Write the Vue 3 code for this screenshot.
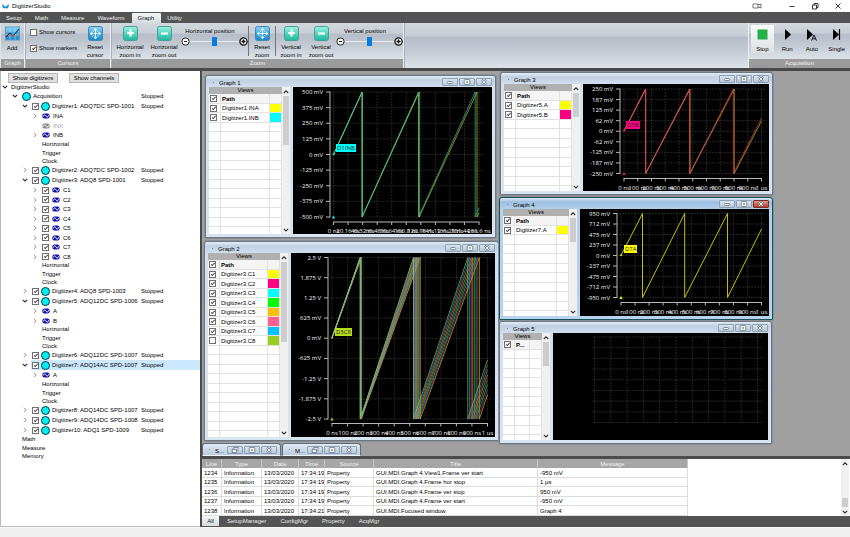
<script setup>
const menuTabs = ['Setup', 'Math', 'Measure', 'Waveform', 'Graph', 'Utility']

const range = (n) => Array.from({ length: n }, (_, i) => i)
const props = ['Horizontal', 'Trigger', 'Clock']

const digitizers = [
  { name: 'Digitizer1: ADQ7DC SPD-1001', open: true, channels: [{ name: 'INA' }, { name: 'INX', off: true }, { name: 'INB' }] },
  { name: 'Digitizer2: ADQ7DC SPD-1002' },
  { name: 'Digitizer3: ADQ8 SPD-1001', open: true, channels: range(8).map((i) => ({ name: 'C' + (i + 1), check: true })) },
  { name: 'Digitizer4: ADQ8 SPD-1003' },
  { name: 'Digitizer5: ADQ12DC SPD-1006', open: true, channels: [{ name: 'A' }, { name: 'B' }] },
  { name: 'Digitizer6: ADQ12DC SPD-1007' },
  { name: 'Digitizer7: ADQ14AC SPD-1007', open: true, selected: true, channels: [{ name: 'A' }] },
  { name: 'Digitizer8: ADQ14DC SPD-1007' },
  { name: 'Digitizer9: ADQ14DC SPD-1008' },
  { name: 'Digitizer10: ADQ1 SPD-1009' },
]

const usTicks = [...range(10).map((i) => (i === 0 ? '0 ns' : i * 100 + ' ns')), '1 us']

// Sawtooth split into one polyline per cycle so later cycles can be dimmed.
function saw(p, color, drops, endX, endY) {
  const { top, bottom } = p
  const [a, b, c] = drops
  return [
    { color, opacity: 0.9, points: `${p.x0},${p.zero} ${a},${top} ${a},${bottom}` },
    { color, opacity: 0.8, points: `${a},${bottom} ${b},${top} ${b},${bottom}` },
    { color, opacity: 0.66, points: `${b},${bottom} ${c},${top} ${c},${bottom} ${endX},${endY}` },
  ]
}

const p1 = { w: 199, h: 147, x0: 40.5, x1: 186, top: 5, bottom: 130, zero: 67.5, ax: 37, ay: 135, lx: 30, ly: 146,
  yl: ['500 mV', '375 mV', '250 mV', '125 mV', '0 mV', '-125 mV', '-250 mV', '-375 mV', '-500 mV'],
  xl: ['0 ns', '20.16 ns', '40.32 ns', '60.48 ns', '80.64 ns', '100.8 ns', '120.96 ns', '141.12 ns', '161.28 ns', '181.44 ns', '201.6 ns'] }
p1.lines = [...saw(p1, '#d8c800', [69.2, 126.2, 184], 186, 126), ...saw(p1, '#20d0c0', [69, 125.5, 182.2], 186, 121)]
p1.tag = { x: 43, y: 57, w: 20, text: 'D1INB', color: '#00ffff' }

const p2 = { w: 204, h: 184, x0: 41, x1: 196.5, top: 4.5, bottom: 166, zero: 85, ax: 37, ay: 170.5, lx: 30, ly: 182,
  yl: ['2.5 V', '1.875 V', '1.25 V', '625 mV', '0 mV', '-625 mV', '-1.25 V', '-1.875 V', '-2.5 V'], xl: usTicks }
const order = ['#d8d020', '#e02080', '#20c8c8', '#30c040', '#e09030', '#e06880', '#2090d8', '#90d050']
p2.lines = order.flatMap((c, i) => {
  const k = 7 - i
  const d3 = 176.8 + k * 1.65
  return saw(p2, c, [69.2 + k * 0.14, 122.5 + k * 0.95, d3], 196.5, 166 - (196.5 - d3) * 3)
})
p2.tag = { x: 44, y: 75, w: 17, text: 'D3C8', color: '#b4dc1e' }

const p3 = { w: 186, h: 107, x0: 41, x1: 178.5, top: 5, bottom: 89.5, zero: 47, ax: 37, ay: 94.5, lx: 30, ly: 106,
  yl: ['250 mV', '187 mV', '125 mV', '62 mV', '0 mV', '-62 mV', '-125 mV', '-187 mV', '-250 mV'], xl: usTicks }
p3.lines = [...saw(p3, '#e0c800', [62.7, 107, 151.2], 178.5, 37), ...saw(p3, '#e03070', [62.5, 106.5, 150.2], 178.5, 34)]
p3.tag = { x: 43, y: 37, w: 14, text: 'D5B', color: '#ff0080' }

const p4 = { w: 189, h: 107, x0: 41, x1: 181.5, top: 4.5, bottom: 88.5, zero: 46.5, ax: 37, ay: 93.5, lx: 30, ly: 105,
  yl: ['950 mV', '712 mV', '475 mV', '237 mV', '0 mV', '-237 mV', '-475 mV', '-712 mV', '-950 mV'], xl: usTicks }
p4.lines = saw(p4, '#d8d400', [62.5, 104.7, 147.5], 181.5, 20).map((l) => ({ ...l, opacity: 0.9 }))
p4.tag = { x: 44, y: 36, w: 13, text: 'D7A', color: '#ffff00' }

const p5 = { w: 215, h: 107, x0: 41.5, x1: 204.5, top: 4, bottom: 89.5, yl: [], xl: [], lines: [] }

const gridX = (p) => range(11).map((i) => p.x0 + ((p.x1 - p.x0) * i) / 10)
const gridY = (p) => range(9).map((i) => p.top + ((p.bottom - p.top) * i) / 8)

const c3 = ['#ffff00', '#ff0080', '#00ffff', '#00ff00', '#ffc000', '#ff6090', '#00c0ff', '#9acd20']
const windows = [
  { title: 'Graph 1', x: 3, y: 4, w: 291, h: 163, list: 73, thumb: 49, plot: p1, rows: 15,
    views: [{ n: 'Digitizer1.INA', c: '#ffff00', on: true }, { n: 'Digitizer1.INB', c: '#00ffff', on: true }] },
  { title: 'Graph 2', x: 2, y: 170, w: 295, h: 200, list: 72, thumb: 80, plot: p2, rows: 19,
    views: c3.map((c, i) => ({ n: 'Digitizer3.C' + (i + 1), c, on: i < 7 })) },
  { title: 'Graph 3', x: 298, y: 1, w: 273, h: 123, list: 68, thumb: 24, plot: p3, rows: 11,
    views: [{ n: 'Digitizer5.A', c: '#ffff00', on: true }, { n: 'Digitizer5.B', c: '#ff0080', on: true }] },
  { title: 'Graph 4', x: 297, y: 126, w: 274, h: 123, list: 66, thumb: 24, plot: p4, rows: 11, active: true,
    views: [{ n: 'Digitizer7.A', c: '#ffff00', on: true }] },
  { title: 'Graph 5', x: 297, y: 250, w: 273, h: 123, list: 39, thumb: 24, plot: p5, rows: 11, narrow: true, views: [] },
]
const minimized = ['S...', 'M...']

const logHead = ['Line', 'Type', 'Date', 'Time', 'Source', 'Title', 'Message']
const log = [
  ['1234', 'Information', '13/03/2020', '17:34:19', 'Property', 'GUI.MDI.Graph 4.View1.Frame ver start', '-950 mV'],
  ['1235', 'Information', '13/03/2020', '17:34:19', 'Property', 'GUI.MDI.Graph 4.Frame hor stop', '1 µs'],
  ['1236', 'Information', '13/03/2020', '17:34:19', 'Property', 'GUI.MDI.Graph 4.Frame ver stop', '950 mV'],
  ['1237', 'Information', '13/03/2020', '17:34:19', 'Property', 'GUI.MDI.Graph 4.Frame ver start', '-950 mV'],
  ['1238', 'Information', '13/03/2020', '17:34:21', 'Property', 'GUI.MDI.Focused window', 'Graph 4'],
]
const logTabs = ['All', 'SetupManager', 'ConfigMgr', 'Property', 'AcqMgr']
</script>

<template>
  <div class="app">
    <svg class="defs" aria-hidden="true">
      <defs>
        <linearGradient id="g-teal" x1="0" y1="0" x2="0" y2="1">
          <stop offset="0" stop-color="#9ff0dc" /><stop offset="0.5" stop-color="#4ed8bf" /><stop offset="1" stop-color="#22b59c" />
        </linearGradient>
        <linearGradient id="g-blue" x1="0" y1="0" x2="0" y2="1">
          <stop offset="0" stop-color="#8fd4f4" /><stop offset="0.5" stop-color="#3ba8e0" /><stop offset="1" stop-color="#1b86c8" />
        </linearGradient>
      </defs>
      <symbol id="i-plus" viewBox="0 0 15 15">
        <rect x="0.5" y="0.5" width="14" height="14" rx="2" fill="url(#g-teal)" stroke="#4b9c92" />
        <path d="M7.5 3.5v7M4 7h7" stroke="#fff" stroke-width="2.2" />
      </symbol>
      <symbol id="i-minus" viewBox="0 0 15 15">
        <rect x="0.5" y="0.5" width="14" height="14" rx="2" fill="url(#g-teal)" stroke="#4b9c92" />
        <path d="M4 7.5h7" stroke="#fff" stroke-width="2.2" />
      </symbol>
      <symbol id="i-reset" viewBox="0 0 15 15">
        <rect x="0.5" y="0.5" width="14" height="14" rx="2" fill="url(#g-blue)" stroke="#4487a8" />
        <path d="M7.5 4v7M4 7.5h7" stroke="#e4f6ff" stroke-width="1" />
        <path d="M7.5 1.8l2.2 2.4H5.3zM7.5 13.2l2.2-2.4H5.3zM1.8 7.5l2.4-2.2v4.4zM13.2 7.5l-2.4-2.2v4.4z" fill="#e4f6ff" />
        <path d="M4.4 4.4l1.6 1.6M10.6 4.4L9 6M4.4 10.6L6 9M10.6 10.6L9 9" stroke="#c3e8fa" stroke-width="0.8" />
      </symbol>
      <symbol id="i-add" viewBox="0 0 15 15">
        <rect x="0.5" y="1" width="14" height="13" fill="url(#g-blue)" stroke="#5a9dc8" />
        <path d="M1 5h13M1 9h13M5 1.5v12M10 1.5v12" stroke="#a6dcf6" stroke-width="0.6" />
        <path d="M1 11l4-4 3 3 6-7" fill="none" stroke="#12305c" stroke-width="1.1" />
        <path d="M1 7l3 3 3-1 3 2 4-4" fill="none" stroke="#e07060" stroke-width="0.9" />
      </symbol>
      <symbol id="i-chan" viewBox="0 0 8 6">
        <rect x="0.3" y="0.6" width="7.4" height="4.8" rx="2.2" fill="currentColor" />
        <path d="M1.2 3.6C2 1.4 3 1.4 4 3s2 1.4 2.8-.8" fill="none" stroke="#fff" stroke-width="1" />
      </symbol>
      <symbol id="i-down" viewBox="0 0 6 6"><path d="M0.8 1.8L3 4l2.2-2.2" fill="none" stroke="#333" stroke-width="1.1" /></symbol>
      <symbol id="i-right" viewBox="0 0 6 6"><path d="M2 0.8L4.2 3 2 5.2" fill="none" stroke="#888" stroke-width="0.9" /></symbol>
      <symbol id="i-up" viewBox="0 0 6 6"><path d="M0.8 4L3 1.8 5.2 4" fill="none" stroke="#333" stroke-width="1.1" /></symbol>
      <symbol id="i-wmin" viewBox="0 0 10 6"><rect x="2.5" y="2.5" width="5" height="2" rx="0.8" fill="#fff" stroke="#6c7a8a" stroke-width="0.9" /></symbol>
      <symbol id="i-wmax" viewBox="0 0 10 6"><rect x="2.2" y="0.6" width="5.6" height="4.8" rx="0.8" fill="#fff" stroke="#6c7a8a" stroke-width="0.9" /><rect x="4.2" y="2.3" width="1.6" height="1.4" fill="#5c6a7a" /></symbol>
      <symbol id="i-wres" viewBox="0 0 10 6"><rect x="4" y="0.5" width="4" height="3" fill="#fff" stroke="#6c7a8a" stroke-width="0.8" /><rect x="2.2" y="2.2" width="4" height="3.2" fill="#fff" stroke="#5c6a7a" stroke-width="0.8" /></symbol>
      <symbol id="i-wx" viewBox="0 0 10 6"><path d="M3 0.8l4 4.4M7 0.8L3 5.2" stroke="#6c7a8a" stroke-width="2.2" /><path d="M3.2 1l3.6 4M6.8 1L3.2 5" stroke="#fff" stroke-width="0.9" /></symbol>
    </svg>

    <header class="titlebar">
      <svg class="logo" viewBox="0 0 7 5"><path d="M0 .5c2 0 1.6 2 3.5 2S5 .5 7 .5C6.800 3 5.800 4.500 4.800 4.500c-.7 0-.8-.6-1.300-.6s-.6.600-1.300.600C1.200 4.500.2 3 0 .5z" fill="#1590d0" /></svg>
      <span class="app-name">DigitizerStudio</span>
      <span class="caption-buttons">
        <button aria-label="Display"><svg viewBox="0 0 10 8"><path d="M1 2h5v4H1zM6 3l3-1v4L6 5" fill="none" stroke="#555" stroke-width="0.8" /></svg></button>
        <button aria-label="Minimize"><svg viewBox="0 0 10 8"><path d="M2.500 4.500h5" stroke="#222" stroke-width="0.9" /></svg></button>
        <button aria-label="Restore"><svg viewBox="0 0 10 8"><path d="M2.500 3h4v4h-4zM4 3V1.500h4V5.500H6.500" fill="none" stroke="#222" stroke-width="0.9" /></svg></button>
        <button aria-label="Close"><svg viewBox="0 0 10 8"><path d="M2.500 1.500l5 5M7.500 1.500l-5 5" stroke="#222" stroke-width="0.9" /></svg></button>
      </span>
    </header>

    <nav class="menu">
      <button v-for="t in menuTabs" :key="t" :class="{ on: t === 'Graph' }">{{ t }}</button>
    </nav>

    <section class="ribbon">
      <div class="group">
        <div class="tools add-tools">
          <button class="tool"><svg class="big"><use href="#i-add" /></svg><span class="single">Add</span></button>
        </div>
        <div class="group-name">Graph</div>
      </div>
      <div class="group">
        <div class="tools cursor-tools">
          <div class="checks">
            <label><input type="checkbox" />Show cursors</label>
            <label><input type="checkbox" checked />Show markers</label>
          </div>
          <button class="tool"><svg class="big"><use href="#i-reset" /></svg><span>Reset<br />cursor</span></button>
        </div>
        <div class="group-name">Cursors</div>
      </div>
      <div class="group">
        <div class="tools zoom-tools">
          <button class="tool wide"><svg class="big"><use href="#i-plus" /></svg><span>Horizontal<br />zoom in</span></button>
          <button class="tool wide"><svg class="big"><use href="#i-minus" /></svg><span>Horizontal<br />zoom out</span></button>
          <div class="slider">
            <label for="hpos">Horizontal position</label>
            <div class="slide-row">
              <button aria-label="Decrease"><svg viewBox="0 0 9 9"><circle cx="4.500" cy="4.500" r="3.600" fill="#fff" stroke="#222" /><path d="M3 4.500h3" stroke="#222" /></svg></button>
              <input id="hpos" type="range" />
              <button aria-label="Increase"><svg viewBox="0 0 9 9"><circle cx="4.500" cy="4.500" r="3.600" fill="#fff" stroke="#111" stroke-width="1.300" /><path d="M2.500 4.500h4M4.500 2.500v4" stroke="#111" stroke-width="1.500" /></svg></button>
            </div>
          </div>
          <i class="sep"></i>
          <button class="tool"><svg class="big"><use href="#i-reset" /></svg><span>Reset<br />zoom</span></button>
          <i class="sep"></i>
          <button class="tool vert"><svg class="big"><use href="#i-plus" /></svg><span>Vertical<br />zoom in</span></button>
          <button class="tool vert"><svg class="big"><use href="#i-minus" /></svg><span>Vertical<br />zoom out</span></button>
          <div class="slider">
            <label for="vpos">Vertical position</label>
            <div class="slide-row">
              <button aria-label="Decrease"><svg viewBox="0 0 9 9"><circle cx="4.500" cy="4.500" r="3.600" fill="#fff" stroke="#222" /><path d="M3 4.500h3" stroke="#222" /></svg></button>
              <input id="vpos" type="range" />
              <button aria-label="Increase"><svg viewBox="0 0 9 9"><circle cx="4.500" cy="4.500" r="3.600" fill="#fff" stroke="#111" stroke-width="1.300" /><path d="M2.500 4.500h4M4.500 2.500v4" stroke="#111" stroke-width="1.500" /></svg></button>
            </div>
          </div>
        </div>
        <div class="group-name">Zoom</div>
      </div>
      <div class="filler"></div>
      <div class="group">
        <div class="tools acq-tools">
          <button class="tool pressed"><svg class="run" viewBox="0 0 13 13"><rect x="1.500" y="1.500" width="10" height="10" fill="#22b14c" /></svg><span>Stop</span></button>
          <button class="tool"><svg class="run" viewBox="0 0 13 13"><path d="M4 1l6 5.500L4 12z" fill="#000" /></svg><span>Run</span></button>
          <button class="tool"><svg class="run" viewBox="0 0 13 13"><path d="M2 1l6 5.500L2 12z" fill="#000" /><path d="M6.500 12.500L9 7l2.500 5.500M7.300 10.800h3.400" fill="none" stroke="#000" stroke-width="0.900" /></svg><span>Auto</span></button>
          <button class="tool"><svg class="run" viewBox="0 0 13 13"><path d="M3 1l6 5.500L3 12z" fill="#000" /><path d="M9.500 1v11" stroke="#000" stroke-width="1.200" /></svg><span>Single</span></button>
        </div>
        <div class="group-name">Acquisition</div>
      </div>
    </section>

    <main class="body">
      <aside class="tree">
        <div class="tree-buttons">
          <button>Show digitizers</button>
          <button>Show channels</button>
        </div>
        <div class="row root"><svg class="chev"><use href="#i-down" /></svg>DigitizerStudio</div>
        <div class="row acq">
          <svg class="chev"><use href="#i-down" /></svg>
          <span class="item"><i class="led"></i><span class="name">Acquisition</span><span class="state">Stopped</span></span>
        </div>
        <template v-for="d in digitizers" :key="d.name">
          <div class="row dig">
            <svg class="chev"><use :href="d.open ? '#i-down' : '#i-right'" /></svg>
            <label class="item" :class="{ selected: d.selected }">
              <input type="checkbox" checked /><i class="led"></i><span class="name">{{ d.name }}</span><span class="state">Stopped</span>
            </label>
          </div>
          <template v-if="d.channels">
            <ul class="channels">
              <li v-for="c in d.channels" :key="c.name" class="row" :class="{ off: c.off }">
                <svg class="chev"><use v-if="!c.off" href="#i-right" /></svg>
                <label class="chan"><input v-if="c.check" type="checkbox" checked /><svg class="chan-icon"><use href="#i-chan" /></svg>{{ c.name }}</label>
              </li>
            </ul>
            <ul class="props"><li v-for="p in props" :key="p">{{ p }}</li></ul>
          </template>
        </template>
        <ul class="props top"><li>Math</li><li>Measure</li><li>Memory</li></ul>
      </aside>

      <div class="work">
        <div class="desktop">
          <section
            v-for="w in windows" :key="w.title" class="win" :class="{ active: w.active }"
            :style="{ left: w.x + 'px', top: w.y + 'px', width: w.w + 'px', height: w.h + 'px' }"
          >
            <div class="win-title">
              <i class="dot"></i><span>{{ w.title }}</span>
              <div class="win-buttons">
                <button aria-label="Minimize"><svg><use href="#i-wmin" /></svg></button>
                <button aria-label="Maximize"><svg><use href="#i-wmax" /></svg></button>
                <button class="close" aria-label="Close"><svg><use href="#i-wx" /></svg></button>
              </div>
            </div>
            <div class="win-body">
              <div class="list" :style="{ width: w.list + 'px' }">
                <table>
                  <colgroup><col class="c-check" /><col /><col class="c-swatch" /></colgroup>
                  <thead><tr><th colspan="3">Views</th></tr></thead>
                  <tbody>
                    <tr class="path"><td><input type="checkbox" checked aria-label="All views" /></td><td>{{ w.narrow ? 'P...' : 'Path' }}</td><td></td></tr>
                    <tr v-for="v in w.views" :key="v.n">
                      <td><input type="checkbox" :checked="v.on" :aria-label="v.n" /></td><td>{{ v.n }}</td><td :style="{ background: v.c }"></td>
                    </tr>
                    <tr v-for="r in w.rows - w.views.length" :key="r"><td></td><td></td><td></td></tr>
                  </tbody>
                </table>
              </div>
              <div class="scroll">
                <svg><use href="#i-up" /></svg>
                <i :style="{ height: w.thumb + 'px' }"></i>
                <svg class="end"><use href="#i-down" /></svg>
              </div>
              <div class="plot">
                <svg :viewBox="`0 0 ${w.plot.w} ${w.plot.h}`">
                  <g class="grid">
                    <path v-for="x in gridX(w.plot)" :key="'x' + x" :d="`M${x} ${w.plot.top}V${w.plot.bottom}`" />
                    <path v-for="y in gridY(w.plot)" :key="'y' + y" :d="`M${w.plot.x0 - 2} ${y}H${w.plot.x1 + 5}`" />
                  </g>
                  <polyline v-for="(l, i) in w.plot.lines" :key="i" :points="l.points" :stroke="l.color" :stroke-opacity="l.opacity" fill="none" />
                  <g v-if="w.plot.ax">
                    <g class="axis">
                      <path :d="`M${w.plot.ax} ${w.plot.top - 0.5}V${w.plot.bottom + 0.5}`" />
                      <path v-for="y in gridY(w.plot)" :key="y" :d="`M${w.plot.ax - 4} ${y}h4`" />
                      <path :d="`M${w.plot.x0 - 0.5} ${w.plot.ay}H${w.plot.x1 + 0.5}`" />
                      <path v-for="x in gridX(w.plot)" :key="x" :d="`M${x} ${w.plot.ay}v3`" />
                    </g>
                    <text v-for="(y, i) in gridY(w.plot)" :key="'l' + i" :x="w.plot.lx" :y="y + 2" text-anchor="end">{{ w.plot.yl[i] }}</text>
                    <text v-for="(x, i) in gridX(w.plot)" :key="'m' + i" :x="x" :y="w.plot.ly" text-anchor="middle">{{ w.plot.xl[i] }}</text>
                    <path :d="`M${w.plot.x0 - 1.5} ${w.plot.zero + 0.5}l1.500 -2.500l1.500 2.500z`" :fill="w.plot.tag.color" fill-opacity="0.7" />
                    <path :d="`M${w.plot.x0 - 1.5} ${w.plot.bottom + 1.5}l1.500 -3l1.500 3z`" :fill="w.plot.tag.color" />
                    <rect :x="w.plot.tag.x" :y="w.plot.tag.y" :width="w.plot.tag.w" height="8" :fill="w.plot.tag.color" />
                    <text class="tag" :x="w.plot.tag.x + 1" :y="w.plot.tag.y + 6">{{ w.plot.tag.text }}</text>
                  </g>
                </svg>
              </div>
            </div>
          </section>
          <div class="dock">
            <div v-for="m in minimized" :key="m" class="mini">
              <i class="dot"></i><span>{{ m }}</span>
              <div class="win-buttons">
                <button aria-label="Restore"><svg><use href="#i-wres" /></svg></button>
                <button aria-label="Maximize"><svg><use href="#i-wmax" /></svg></button>
                <button aria-label="Close"><svg><use href="#i-wx" /></svg></button>
              </div>
            </div>
          </div>
        </div>

        <div class="log">
          <div class="log-table">
            <table>
              <colgroup><col v-for="h in logHead" :key="h" :class="'l-' + h.toLowerCase()" /></colgroup>
              <thead><tr><th v-for="h in logHead" :key="h">{{ h }}</th></tr></thead>
              <tbody><tr v-for="r in log" :key="r[0]"><td v-for="(c, i) in r" :key="i">{{ c }}</td></tr></tbody>
            </table>
          </div>
          <div class="scroll">
            <svg><use href="#i-up" /></svg>
            <i class="log-thumb"></i>
            <svg><use href="#i-down" /></svg>
          </div>
        </div>
        <nav class="log-tabs">
          <button v-for="t in logTabs" :key="t" :class="{ on: t === 'All' }">{{ t }}</button>
        </nav>
      </div>
    </main>
    <footer class="status"></footer>
  </div>
</template>

<style>
body { margin: 0; background: #f0f0f0; }
</style>

<style scoped>
.app { display: flex; flex-direction: column; min-height: 100vh; font: 6px/8px "Liberation Sans", Arial, sans-serif; color: #000; background: #f0f0f0; }
.app *, .app *::after { box-sizing: border-box; }
.defs { position: absolute; width: 0; height: 0; }
button { font: inherit; color: inherit; padding: 0; border: 0; background: none; }
i { display: block; flex: none; }
ul { list-style: none; margin: 0; padding: 0; }
svg { display: block; flex: none; }

input[type="checkbox"] { appearance: none; display: grid; place-items: center; flex: none; width: 7px; height: 7px; margin: 0; border: 1px solid #707070; background: #fff; }
input[type="checkbox"]:checked::after { content: ""; width: 4px; height: 2px; margin-bottom: 1px; border: solid #444; border-width: 0 0 1px 1px; transform: rotate(-45deg); }

.titlebar { display: flex; align-items: center; height: 12px; padding: 0 7px 0 2px; background: #fff; }
.logo { width: 7px; height: 5px; margin-right: 3px; }
.app-name { flex: 1; }
.caption-buttons { display: grid; grid-template-columns: 35px 23px 23px 10px; }
.caption-buttons svg { width: 10px; height: 8px; }

.menu { display: flex; height: 11px; padding-top: 1px; background: #545454; color: #f0f0f0; }
.menu button { padding: 0 7px 0 6px; }
.menu .on { background: linear-gradient(#f4f7f8, #d5dcde); color: #111; border-radius: 1px 1px 0 0; }

.ribbon { display: flex; height: 48px; padding-left: 1px; background: #dfe3e8; border-bottom: 3px solid #484848; }
.group { display: flex; flex-direction: column; border-right: 1px solid #e8ecf0; box-shadow: 1px 0 0 #aab0b8; margin-right: 1px; }
.group:last-child { margin-right: 0; border-left: 1px solid #eee; border-right: 0; }
.tools, .filler { flex: 1; background: linear-gradient(#d3d8de 0, #c8cdd6 28%, #b6bdc9 32%, #c2c9d2 60%, #dce2e8 100%); }
.tools { display: flex; align-items: flex-start; padding-top: 3px; }
.group-name { height: 9px; line-height: 9px; text-align: center; color: #f2f2f2; background: #9b9b9b; }
.tool { display: flex; flex-direction: column; align-items: center; gap: 2px; width: 26px; }
.tool.wide { width: 34px; }
.tool.vert { width: 30px; }
.big { width: 15px; height: 15px; }
.tool .single { padding-top: 1px; }
.add-tools { width: 23px; }
.add-tools .tool { width: 22px; }
.cursor-tools { width: 84px; justify-content: space-between; padding-right: 2px; padding-left: 2px; }
.checks { display: grid; gap: 8px; padding: 2px 0 0 2px; }
.checks label { display: flex; align-items: center; gap: 2px; }
.zoom-tools { width: 291px; padding-left: 1px; }
.slider { width: 67px; text-align: center; }
.slider label { display: block; padding: 1px 9px 0 0; white-space: nowrap; }
.slide-row { display: flex; align-items: center; justify-content: center; margin-top: 2px; }
.slide-row svg { width: 9px; height: 9px; }
.slide-row input { appearance: none; width: 49px; height: 9px; margin: 0; background: linear-gradient(#e8ebee, #e8ebee) center / 100% 1px no-repeat; }
.slide-row input::-webkit-slider-thumb { appearance: none; width: 5px; height: 9px; background: #0a7be0; border: 0; }
.sep { width: 1px; height: 30px; background: #6e757e; }
.acq-tools { width: 101px; padding: 2px 1px 0 2px; }
.acq-tools .tool { width: 25px; height: 28px; gap: 4px; padding-top: 3px; }
.acq-tools .pressed { width: 23px; margin-right: 1px; background: linear-gradient(#fafafa, #dcdfe2); }
.run { width: 13px; height: 13px; }

.body { display: flex; flex: 1; }
.tree { flex: none; width: 200px; padding-top: 1px; background: #fff; border-left: 1px solid #b8b8c0; border-bottom: 1px solid #b8b8c0; }
.tree-buttons { display: flex; gap: 11px; height: 11px; padding: 1px 0 0 7px; }
.tree-buttons button { width: 50px; height: 10px; border: 1px solid #b4b4b4; background: #e1e1e1; line-height: 8px; }
.row { display: flex; align-items: center; height: 10px; }
.chev { width: 6px; height: 6px; margin-right: 3px; }
.root { height: 8px; padding-left: 1px; }
.acq { padding-left: 11px; }
.dig { padding-left: 21px; }
.item { display: flex; align-items: center; flex: 1; height: 10px; padding-left: 1px; }
.selected { background: #cce8ff; }
.led { width: 9px; height: 9px; margin: 0 2px; border: 1px solid #063c46; border-radius: 50%; background: #00eef4; }
.acq .item { padding-left: 0; }
.acq .led { margin-left: 1px; }
.name { flex: 1; white-space: nowrap; }
.state { width: 59px; }
.channels .row { padding-left: 31px; }
.channels .row:nth-child(even) { height: 9px; }
.chan { display: flex; align-items: center; gap: 3px; padding-left: 1px; }
.chan-icon { width: 8px; height: 6px; color: #1414a8; }
.off { color: #a0a0a0; }
.off .chan-icon { color: #888; }
.props { padding-left: 41px; }
.props.top { padding-left: 21px; }
.props li { height: 8px; }
.props li:first-child { height: 9px; line-height: 9px; }

.work { display: flex; flex-direction: column; flex: 1; min-width: 0; border-left: 2px solid #4a4a4a; }
.desktop { position: relative; display: flex; align-items: flex-end; flex: 1; background: #a0a0a0; border-bottom: 3px solid #4c4c4c; }
.win { position: absolute; display: flex; flex-direction: column; padding: 0 3px 3px; border: 1px solid #6d7883; border-radius: 3px 3px 1px 1px; background: linear-gradient(#e2ecf6 0, #c0d0e2 4px, #d3e0ef 12px, #d7e4f2 100%); box-shadow: 0 0 0 1px #8a8f95; }
.active { border-color: #14525e; background: linear-gradient(#dce9f6 0, #9dbfe0 4px, #b5d0ea 12px, #b9d3ee 100%); }
.win-title { display: flex; align-items: center; height: 11px; padding: 2px 0 0 4px; }
.dot { width: 1px; height: 1px; background: #7a8794; margin-right: 5px; }
.win-buttons { display: flex; margin-left: auto; }
.win-buttons button { display: grid; place-items: center; width: 16px; height: 8px; margin-left: 1px; border: 1px solid #8fa0b2; border-radius: 1px; background: linear-gradient(#d8e3ef, #b9c9da); }
.win-buttons svg { width: 10px; height: 6px; }
.active .close { background: linear-gradient(#e09a88, #c03828); border-color: #7c3028; }
.win-title .win-buttons { margin-bottom: 1px; }
.win-body { display: flex; flex: 1; min-height: 0; }
.list { overflow: hidden; background: #fff; }
table { border-collapse: separate; border-spacing: 0; table-layout: fixed; width: 100%; }
th, td { padding: 0; font-weight: normal; overflow: hidden; white-space: nowrap; }
.list th { height: 7px; line-height: 7px; background: #b0b0b0; }
.c-check, .c-swatch { width: 12px; }
.list td { height: 10px; line-height: 8px; border: solid #e2e2e2; border-width: 0 1px 1px 0; padding-left: 1px; }
.list tr:nth-child(even) td { height: 9px; }
.list .path td { background: #f4f4f4; font-weight: bold; }
.scroll { display: flex; flex-direction: column; align-items: center; flex: none; width: 8px; padding: 2px 0 1px; background: #f0f0f0; }
.scroll svg { width: 6px; height: 6px; }
.scroll i { width: 6px; margin-top: 1px; background: #cdcdcd; }
.scroll .end { margin-top: auto; }
.plot { flex: 1; margin-left: 3px; background: #000; min-width: 0; }
.plot svg { width: 100%; height: 100%; }
.plot text { font: 6px "Open Sans", "Noto Sans", sans-serif; fill: #f4f4f4; }
.plot .tag { fill: #222; }
.grid path { stroke: #262626; stroke-width: 1; stroke-dasharray: 2 1; }
.axis path { stroke: #b8b8b8; stroke-width: 1; }

.dock { display: flex; gap: 1px; }
.mini { display: flex; align-items: center; width: 79px; height: 13px; padding: 0 3px 0 6px; border: 1px solid #5e6b78; border-bottom-color: #eef4fa; border-radius: 3px 3px 0 0; background: linear-gradient(#dde8f3, #bccde0); }
.mini span { padding-top: 3px; }

.log { display: flex; background: #fff; padding-right: 1px; }
.log-table { flex: 1; min-width: 0; }
.log table { width: 486px; }
.l-line { width: 20px; }
.l-type { width: 40px; }
.l-date { width: 37px; }
.l-time { width: 26px; }
.l-source { width: 49px; }
.l-title { width: 164px; }
.log th { height: 9px; line-height: 8px; background: #a6a6a6; color: #f4f4f4; border-right: 1px solid #c6c6c6; }
.log td { height: 10px; line-height: 8px; padding-left: 2px; border: solid #dcdcdc; border-width: 0 1px 1px 0; }
.log tr:nth-child(even) td { height: 9px; }
.log-thumb { height: 9px; }
.log .scroll i { margin: auto 0 2px; }
.log-tabs { display: flex; gap: 14px; height: 11px; padding-bottom: 1px; background: #545454; color: #ededed; }
.log-tabs .on { width: 17px; margin-right: -6px; background: linear-gradient(#f6f8f9, #d4dbdd); color: #111; }
.status { height: 10px; background: #f0f0f0; border-top: 1px solid #fafafa; }
</style>
